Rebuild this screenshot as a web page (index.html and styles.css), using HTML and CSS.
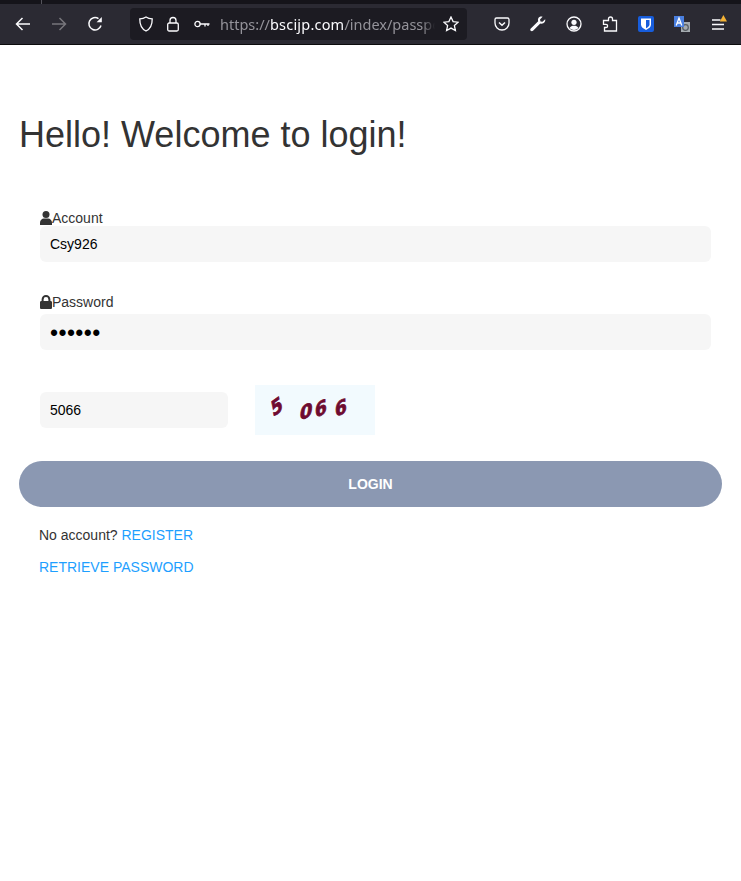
FILE: index.html
```html
<!DOCTYPE html>
<html lang="en">
<head>
  <meta charset="UTF-8">
  <title>Login</title>
  <link rel="stylesheet" href="styles.css">
</head>
<body>
  <div class="tabstrip"><span class="tabline"></span></div>
  <header class="toolbar">
    <button class="tool" aria-label="Back">
      <svg width="16" height="16" viewBox="0 0 16 16" fill="none" stroke="#fbfbfe" stroke-width="1.5"><path d="M15 8H1.500M7.500 2L1.500 8l6 6"/></svg>
    </button>
    <button class="tool" aria-label="Forward">
      <svg width="16" height="16" viewBox="0 0 16 16" fill="none" stroke="#77767c" stroke-width="1.5"><path d="M1 8h13.500M8.500 2l6 6-6 6"/></svg>
    </button>
    <button class="tool" aria-label="Reload">
      <svg width="16" height="16" viewBox="0 0 16 16" fill="none" stroke="#fbfbfe" stroke-width="1.5"><path d="M14 9.500A6.200 6.200 0 1 1 11.500 2.600"/><path d="M14.800 1v5.200H9.600z" fill="#fbfbfe" stroke="none"/></svg>
    </button>
    <div class="urlbar">
      <svg class="url-icon" width="16" height="16" viewBox="0 0 16 16" fill="none" stroke="#fbfbfe" stroke-width="1.3"><path d="M8 1c2 1.300 4 1.800 6.200 1.900C14.300 9 12 13 8 15 4 13 1.700 9 1.800 2.900 4 2.800 6 2.300 8 1z"/></svg>
      <svg class="url-icon lock" width="14" height="16" viewBox="0 0 14 16" fill="none" stroke="#fbfbfe" stroke-width="1.3"><rect x="1.700" y="7" width="10.600" height="8" rx="1.500"/><path d="M4 7V4.500a3 3 0 0 1 6 0V7"/></svg>
      <svg class="url-icon key" width="16" height="8" viewBox="0 0 16 8" fill="none" stroke="#fbfbfe" stroke-width="1.300"><circle cx="3.500" cy="4" r="2.600"/><path d="M6 4h9.500M11 4v2.500M14 4v2"/></svg>
      <div class="url-text"><span class="dim">https://</span><span class="host">bscijp.com</span><span class="dim">/index/passpo</span></div>
      <svg class="star" width="16" height="16" viewBox="0 0 16 16" fill="none" stroke="#fbfbfe" stroke-width="1.300"><path d="M8 1l2.100 4.600 5 .6-3.700 3.400 1 4.900L8 12.100l-4.400 2.400 1-4.900L.9 6.200l5-.6z"/></svg>
    </div>
    <div class="tools-right">
      <button class="tool" aria-label="Pocket">
        <svg width="16" height="16" viewBox="0 0 16 16" fill="none" stroke="#fbfbfe" stroke-width="1.300"><path d="M2.500 2h11A1.500 1.500 0 0 1 15 3.500V7a7 7 0 0 1-14 0V3.500A1.500 1.500 0 0 1 2.500 2z"/><path d="M5 6.500L8 9.300l3-2.800" stroke-width="1.500"/></svg>
      </button>
      <button class="tool" aria-label="Tools">
        <svg width="16" height="16" viewBox="0 0 16 16" fill="#fbfbfe"><path d="M15.200 3.300l-2.700 2.500-2-.4-.5-2L12.600.8C10.800.200 9 .900 8.300 2.300c-.5 1-.5 2-.1 3L.8 12.400c-.7.700-.7 1.700-.1 2.400.6.600 1.700.600 2.300 0l7.300-7.300c1 .3 2 .2 3-.3 1.500-.8 2.300-2.500 1.900-3.900z"/></svg>
      </button>
      <button class="tool" aria-label="Account">
        <svg width="16" height="16" viewBox="0 0 16 16" fill="none" stroke="#fbfbfe" stroke-width="1.300"><circle cx="8" cy="8" r="7"/><circle cx="8" cy="6.300" r="2.600" fill="#fbfbfe" stroke="none"/><path d="M3.500 12c1-1.700 2.600-2.300 4.500-2.300s3.500.6 4.500 2.300c-1.200 1.200-2.800 1.900-4.500 1.900S4.700 13.200 3.500 12z" fill="#fbfbfe" stroke="none"/></svg>
      </button>
      <button class="tool" aria-label="Extensions">
        <svg width="16" height="16" viewBox="0 0 16 16" fill="none" stroke="#fbfbfe" stroke-width="1.300"><path d="M8.500 1c1.300 0 2 .8 2 2v1.500H14.500V15H2.500v-3.500H4c1 0 1.600-.7 1.600-1.600S5 8.300 4 8.300H1.500V4.500h5V3c0-1.200.7-2 2-2z"/></svg>
      </button>
      <button class="tool" aria-label="Bitwarden">
        <svg width="16" height="16" viewBox="0 0 16 16"><rect width="16" height="16" rx="2" fill="#175ddc"/><path d="M3 2.500h10v6c0 2.500-2.200 4-5 5.500-2.800-1.500-5-3-5-5.500z" fill="#fff"/><path d="M8 4h3.500v4.500C11.500 10 10 11.200 8 12.300z" fill="#175ddc"/></svg>
      </button>
      <button class="tool" aria-label="Translate">
        <svg width="16" height="16" viewBox="0 0 16 16"><rect x="7" y="6" width="9" height="10" fill="#a5abb0"/><circle cx="11.500" cy="11.500" r="2.800" fill="none" stroke="#555b61" stroke-width="1.200"/><rect width="10" height="11" fill="#4a7fe0"/><path d="M2.200 9.500L5 2l2.800 7.500M3.300 7h3.400" fill="none" stroke="#fff" stroke-width="1.300"/></svg>
      </button>
      <button class="tool" aria-label="Menu">
        <svg width="18" height="18" viewBox="0 0 18 18" fill="none" stroke="#fbfbfe" stroke-width="1.300"><path d="M3 5h8.500M3 9.500h12M3 14h12"/><path d="M10.800 6.500L14.400 0 18 6.500z" fill="#f5b335" stroke="none"/></svg>
      </button>
    </div>
  </header>

  <main class="page">
    <h1 class="title">Hello! Welcome to login!</h1>
    <form class="login-form">
      <div class="field">
        <label class="field-label">
          <svg width="12" height="14" viewBox="0 0 12 14" fill="#333"><circle cx="6" cy="3.500" r="3.500"/><path d="M0 14v-2.300C0 9 2 7.400 3.800 7.400h4.400C10 7.400 12 9 12 11.700V14z"/></svg>Account
        </label>
        <input class="text-input" type="text" value="Csy926">
      </div>
      <div class="field field-password">
        <label class="field-label">
          <svg width="12" height="14" viewBox="0 0 12 14" fill="#333"><path d="M1.600 6V4.400a4.400 4.400 0 0 1 8.800 0V6h.3c.7 0 1.300.6 1.300 1.300v5.400c0 .7-.6 1.300-1.300 1.300H1.300C.6 14 0 13.400 0 12.700V7.300C0 6.600.6 6 1.300 6zm2 0h4.800V4.400a2.400 2.400 0 0 0-4.800 0z"/></svg>Password
        </label>
        <input class="text-input password-input" type="password" value="secret">
      </div>
      <div class="captcha-row">
        <input class="text-input captcha-input" type="text" value="5066">
        <svg class="captcha" width="120" height="50" viewBox="0 0 120 50">
          <rect width="120" height="50" fill="#f2fafe"/>
          <g class="captcha-digits">
            <text transform="translate(18 32) rotate(-12) skewY(-24) scale(.85 1)">5</text>
            <text transform="translate(44 35) rotate(8) skewY(-24) scale(.85 1)">0</text>
            <text transform="translate(60 33) skewY(-24) scale(.85 1)">6</text>
            <text transform="translate(80 32) skewY(-22) scale(.85 1)">6</text>
          </g>
        </svg>
      </div>
      <button class="login-btn" type="button">LOGIN</button>
    </form>
    <p class="form-link">No account? <a href="#">REGISTER</a></p>
    <p class="form-link"><a href="#">RETRIEVE PASSWORD</a></p>
  </main>
</body>
</html>
```

FILE: styles.css
```css
body {
  margin: 0;
  background-color: #fff;
  color: #333;
  font-family: "Liberation Sans", Arial, sans-serif;
  font-size: 14px;
}

.tabstrip {
  height: 4px;
  background-color: #15141a;
}

.tabline {
  display: block;
  width: 1px;
  height: 4px;
  margin-left: 41px;
  background-color: #55545c;
}

.toolbar {
  display: flex;
  align-items: center;
  height: 41px;
  padding: 0 5px;
  box-sizing: border-box;
  background-color: #2b2a33;
  border-bottom: 1px solid #0c0c0d;
}

.tool {
  display: flex;
  align-items: center;
  justify-content: center;
  width: 36px;
  height: 32px;
  padding: 0;
  border: none;
  background: none;
}

.urlbar {
  display: flex;
  align-items: center;
  width: 337px;
  height: 32px;
  margin-left: 17px;
  box-sizing: border-box;
  padding: 0 8px;
  border-radius: 4px;
  background-color: #1c1b22;
}

.url-icon {
  flex: none;
  margin-right: 12px;
}

.url-icon.lock {
  margin-right: 14px;
}

.url-icon.key {
  margin-right: 10px;
}

.url-text {
  flex: none;
  width: 215px;
  white-space: nowrap;
  font-family: "Noto Sans", sans-serif;
  font-size: 14.5px;
  color: #fbfbfe;
  -webkit-mask-image: linear-gradient(to right, #000 94%, transparent);
  mask-image: linear-gradient(to right, #000 94%, transparent);
}

.url-text .dim {
  color: #94939a;
}

.url-text .host {
  letter-spacing: 0.2px;
}

.star {
  flex: none;
  margin-left: 8px;
}

.tools-right {
  display: flex;
  margin-left: 17px;
}

.page {
  padding: 0 19px;
}

.title {
  margin: 69px 0 0;
  font-size: 36px;
  font-weight: 400;
  line-height: 42px;
  color: #333;
}

.login-form {
  margin: 55px 0 20px;
}

.field {
  margin: 0 11px 0 21px;
}

.field-password {
  margin-top: 33px;
}

.field-label {
  display: flex;
  align-items: center;
  height: 15px;
  line-height: 15px;
}

.field-label svg {
  margin-top: -2px;
}

.text-input {
  display: block;
  width: 100%;
  height: 36px;
  box-sizing: border-box;
  padding: 0 10px;
  border: none;
  border-radius: 6px;
  background-color: #f6f6f6;
  color: #000;
  font-family: "Liberation Sans", Arial, sans-serif;
  font-size: 14px;
}

.field-password .field-label {
  margin-bottom: 4px;
}

.password-input {
  padding-top: 2px;
  font-size: 23px;
  letter-spacing: 0.4px;
}

.captcha-row {
  display: flex;
  align-items: center;
  gap: 27px;
  margin: 35px 0 0 21px;
}

.captcha-input {
  width: 188px;
}

.captcha {
  display: block;
}

.captcha-digits {
  font-family: "DejaVu Sans", sans-serif;
  font-weight: 700;
  font-size: 20px;
  fill: #6e0b30;
  stroke: #6e0b30;
  stroke-width: 0.8;
}

.login-btn {
  display: block;
  width: 703px;
  height: 46px;
  margin-top: 26px;
  border: none;
  border-radius: 23px;
  background-color: #8b98b2;
  color: #fff;
  font-family: "Liberation Sans", Arial, sans-serif;
  font-size: 14px;
  font-weight: 700;
}

.form-link {
  margin: 0 0 16px 20px;
  line-height: 16px;
  color: #333;
}

.form-link a {
  color: #1e9fff;
  text-decoration: none;
}
```
